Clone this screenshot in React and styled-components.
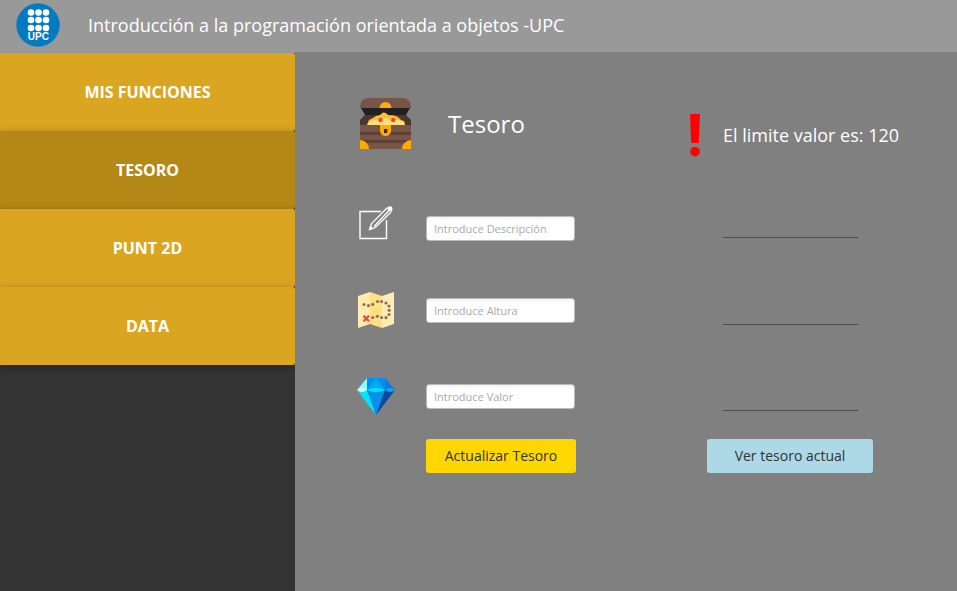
import React, { useState } from "react";
import styled, { createGlobalStyle } from "styled-components";

const GlobalStyle = createGlobalStyle`
  *, *::before, *::after { box-sizing: border-box; }
  body {
    margin: 0;
    font-family: "Open Sans", "Noto Sans", sans-serif;
    color: #fff;
    background: #808080;
  }
  button, input { font-family: inherit; }
`;

const Page = styled.div`
  min-height: 100vh;
  display: flex;
  flex-direction: column;
`;

const TopBar = styled.header`
  height: 52px;
  display: flex;
  align-items: center;
  gap: 28px;
  padding: 0 16px 2px;
  background: #999;
`;

const AppTitle = styled.h1`
  margin: 0;
  font-size: 18px;
  line-height: 24px;
  font-weight: 400;
`;

const Body = styled.div`
  flex: 1;
  display: flex;
`;

const Sidebar = styled.nav`
  flex: none;
  width: 295px;
  display: flex;
  flex-direction: column;
  overflow: hidden;
  border-top: 1px solid #999;
  background: #333;
`;

const NavButton = styled.button`
  flex: none;
  height: 78px;
  border: 0;
  border-radius: 0 2px 2px 0;
  background: ${(p) => (p.$active ? "#b38817" : "#daa520")};
  color: #fff;
  font-size: 16px;
  line-height: 20px;
  font-weight: 700;
  text-transform: uppercase;
  box-shadow: 0 2px 8px rgba(0, 0, 0, 0.3);
  cursor: pointer;
`;

const Main = styled.main`
  flex: 1;
  min-width: 0;
  padding: 44px 24px 24px 62px;
  background: #808080;
`;

const Heading = styled.div`
  display: grid;
  grid-template-columns: minmax(200px, 332px) 1fr;
  align-items: end;
  margin-bottom: 24px;
`;

const TitleGroup = styled.div`
  display: flex;
  align-items: center;
  gap: 37px;
  padding: 0 3px 8px;
`;

const Title = styled.h2`
  margin: 0;
  font-size: 24px;
  line-height: 32px;
  font-weight: 400;
`;

const Notice = styled.p`
  display: flex;
  align-items: center;
  gap: 22px;
  margin: 0;
  padding-top: 17px;
  font-size: 18px;
  line-height: 24px;
`;

const Row = styled.div`
  display: grid;
  grid-template-columns: 69px minmax(100px, 149px) minmax(24px, 132px) minmax(166px, 1fr);
  align-items: ${(p) => p.$align || "center"};
  height: ${(p) => (p.$actions ? "34px" : "86px")};
  padding-bottom: ${(p) => (p.$align === "end" ? "26px" : "0")};
`;

const IconLabel = styled.label`
  display: flex;
`;

const Field = styled.input`
  width: 100%;
  height: 25px;
  padding: 0 7px;
  border: 1px solid #bababa;
  border-radius: 3px;
  background: linear-gradient(#f2f2f2, #fff 4px);
  color: #333;
  font-size: 11px;
  line-height: 16px;
  &::placeholder { color: #aaa; opacity: 1; }
`;

const Result = styled.output`
  grid-column: 4;
  width: 135px;
  height: 33px;
  margin: 0 0 3px 16px;
  border-bottom: 1px solid #4c4c4c;
  font-size: 14px;
  line-height: 32px;
`;

const ActionButton = styled.button`
  grid-column: ${(p) => p.$column};
  width: ${(p) => (p.$wide ? "166px" : "150px")};
  height: 34px;
  padding: 0;
  border: 0;
  border-radius: 3px;
  background: ${(p) => p.$color};
  color: #333;
  font-size: 14px;
  line-height: 20px;
  white-space: nowrap;
  cursor: pointer;
`;

const Icon = styled.svg`
  display: block;
  flex: none;
`;

function Logo() {
  return (
    <Icon width="44" height="44" viewBox="0 0 44 44" role="img" aria-label="UPC">
      <circle cx="22" cy="22" r="21.7" fill="#007bc0" />
      {[9.5, 17, 25].map((y) =>
        [15, 22.5, 30].map((x) => <circle key={`${x}-${y}`} cx={x} cy={y} r="3.3" fill="#fff" />)
      )}
      <text x="22.3" y="37.3" textAnchor="middle" fill="#fff" fontSize="10" fontWeight="700" fontFamily="Liberation Sans, sans-serif">UPC</text>
    </Icon>
  );
}

function ChestIcon() {
  return (
    <Icon width="51" height="51" viewBox="0 0 51 51" aria-hidden="true">
      <path d="M7 0h37q7 1 7 10H0Q0 1 7 0z" fill="#795548" />
      <path d="M1 10h49l-4 7H5z" fill="#212121" />
      <path d="M5 17h41l5 5v5H0v-5z" fill="#4e342e" />
      <path d="M19.500 10a6 6 0 0 1 12 0z" fill="#ffab00" />
      <path d="M7 27L9 22 13 20 16 18 20 17 23 14.500 26 15 28 17 34 17.500 38 19 41 22 44 23 45 27z" fill="#fbc02d" />
      <path d="M7 27L9 24 14 22 20 23 26 20 31 23 38 22 44 24 45 27z" fill="#ffe082" />
      <circle cx="20.500" cy="22" r="2.200" fill="#f44336" />
      <circle cx="33.200" cy="22" r="2.200" fill="#f44336" />
      <path d="M0 27h51v24H0z" fill="#795548" />
      <path d="M0 34h51v3H0zM0 42h51v3H0z" fill="#5d4037" />
      <path d="M0 42a9 9 0 0 1 9 9H0zM51 42a9 9 0 0 0-9 9h9z" fill="#ffab00" />
      <path d="M20 27h11v5.500a5.500 5.500 0 0 1-11 0z" fill="#ffab00" />
      <path d="M24 31h3.200v4H24z" fill="#3e2723" />
    </Icon>
  );
}

function ExclamationIcon() {
  return (
    <Icon width="12" height="44" viewBox="0 0 12 44" aria-hidden="true">
      <path d="M1 1h10l-1.200 29H2.200z" fill="#f00" />
      <circle cx="6" cy="38.700" r="4.800" fill="#f00" />
    </Icon>
  );
}

function EditIcon() {
  return (
    <Icon width="38" height="36" viewBox="0 1 38 36" role="img" aria-label="Descripción">
      <path d="M24 7.500H3v27h26.500V16" fill="none" stroke="#fff" strokeWidth="1.400" />
      <path d="M30.500 3.500L14.500 19.500l-2 6 6-2L34.500 7.500M17 22.500L32.500 6M12.700 25.300l2.500-2.500" fill="none" stroke="#fff" strokeWidth="1.300" />
      <path d="M13 22.500l-1 3.700 4-1.200z" fill="#fff" />
      <circle cx="33" cy="4.800" r="2.500" fill="#fff" />
    </Icon>
  );
}

function MapIcon() {
  const dots = [[7, 13.5], [11.5, 14.7], [15.7, 13.4], [20.5, 10.5], [24.6, 10.5], [29, 12], [32, 15], [32.2, 19.3], [32, 23.5], [29, 26.7], [24.6, 26.5], [20.3, 25.3], [15.7, 26.5]];
  return (
    <Icon width="38" height="38" viewBox="0 0 38 38" role="img" aria-label="Altura">
      <path d="M1 5l12-4v32L1 37zM25 5l12-4v32l-12 4z" fill="#ffecb3" />
      <path d="M13 1l12 4v32l-12-4z" fill="#ffe082" />
      {dots.map(([x, y]) => <circle key={`${x}-${y}`} cx={x} cy={y} r="1.600" fill="#8d6e63" />)}
      <path d="M6.500 24.800l5.500 5.500M12 24.800l-5.500 5.500" stroke="#f44336" strokeWidth="2.300" />
    </Icon>
  );
}

function GemIcon() {
  return (
    <Icon width="38" height="38" viewBox="0 0 38 38" role="img" aria-label="Valor">
      <path d="M10 1h18l10 12H0z" fill="#0091ea" />
      <path d="M10 1L0 13h10z" fill="#84ffff" />
      <path d="M28 1l10 12H28z" fill="#1976d2" />
      <path d="M19 1l9 12H10z" fill="#00a9fb" />
      <path d="M0 13h10l9 25z" fill="#00e5ff" />
      <path d="M10 13h18l-9 25z" fill="#0091ea" />
      <path d="M28 13h10L19 38z" fill="#0d47a1" />
      <path d="M0 13q5-4 10 0-5 4-10 0z" fill="#e0f7fa" />
      <path d="M10 13q9-4 18 0-9 4-18 0z" fill="#00e5ff" />
      <path d="M28 13q5-4 10 0-5 4-10 0z" fill="#00a9fb" />
    </Icon>
  );
}

const sections = ["Mis funciones", "Tesoro", "Punt 2D", "Data"];
const fields = [
  { id: "descripcion", placeholder: "Introduce Descripción", FieldIcon: EditIcon, align: "end" },
  { id: "altura", placeholder: "Introduce Altura", FieldIcon: MapIcon },
  { id: "valor", placeholder: "Introduce Valor", FieldIcon: GemIcon },
];

export default function App() {
  const [active, setActive] = useState("Tesoro");
  return (
    <Page>
      <GlobalStyle />
      <TopBar>
        <Logo />
        <AppTitle>Introducción a la programación orientada a objetos -UPC</AppTitle>
      </TopBar>
      <Body>
        <Sidebar>
          {sections.map((name) => (
            <NavButton key={name} type="button" $active={name === active} onClick={() => setActive(name)}>
              {name}
            </NavButton>
          ))}
        </Sidebar>
        <Main>
          <Heading>
            <TitleGroup>
              <ChestIcon />
              <Title>Tesoro</Title>
            </TitleGroup>
            <Notice>
              <ExclamationIcon />
              El limite valor es: 120
            </Notice>
          </Heading>
          <form onSubmit={(e) => e.preventDefault()}>
            {fields.map(({ id, placeholder, FieldIcon, align }) => (
              <Row key={id} $align={align}>
                <IconLabel htmlFor={id}><FieldIcon /></IconLabel>
                <Field id={id} type="text" placeholder={placeholder} />
                <Result htmlFor={id} />
              </Row>
            ))}
            <Row $actions>
              <ActionButton type="submit" $column={2} $color="#ffd700">Actualizar Tesoro</ActionButton>
              <ActionButton type="button" $column={4} $color="#add8e6" $wide>Ver tesoro actual</ActionButton>
            </Row>
          </form>
        </Main>
      </Body>
    </Page>
  );
}
